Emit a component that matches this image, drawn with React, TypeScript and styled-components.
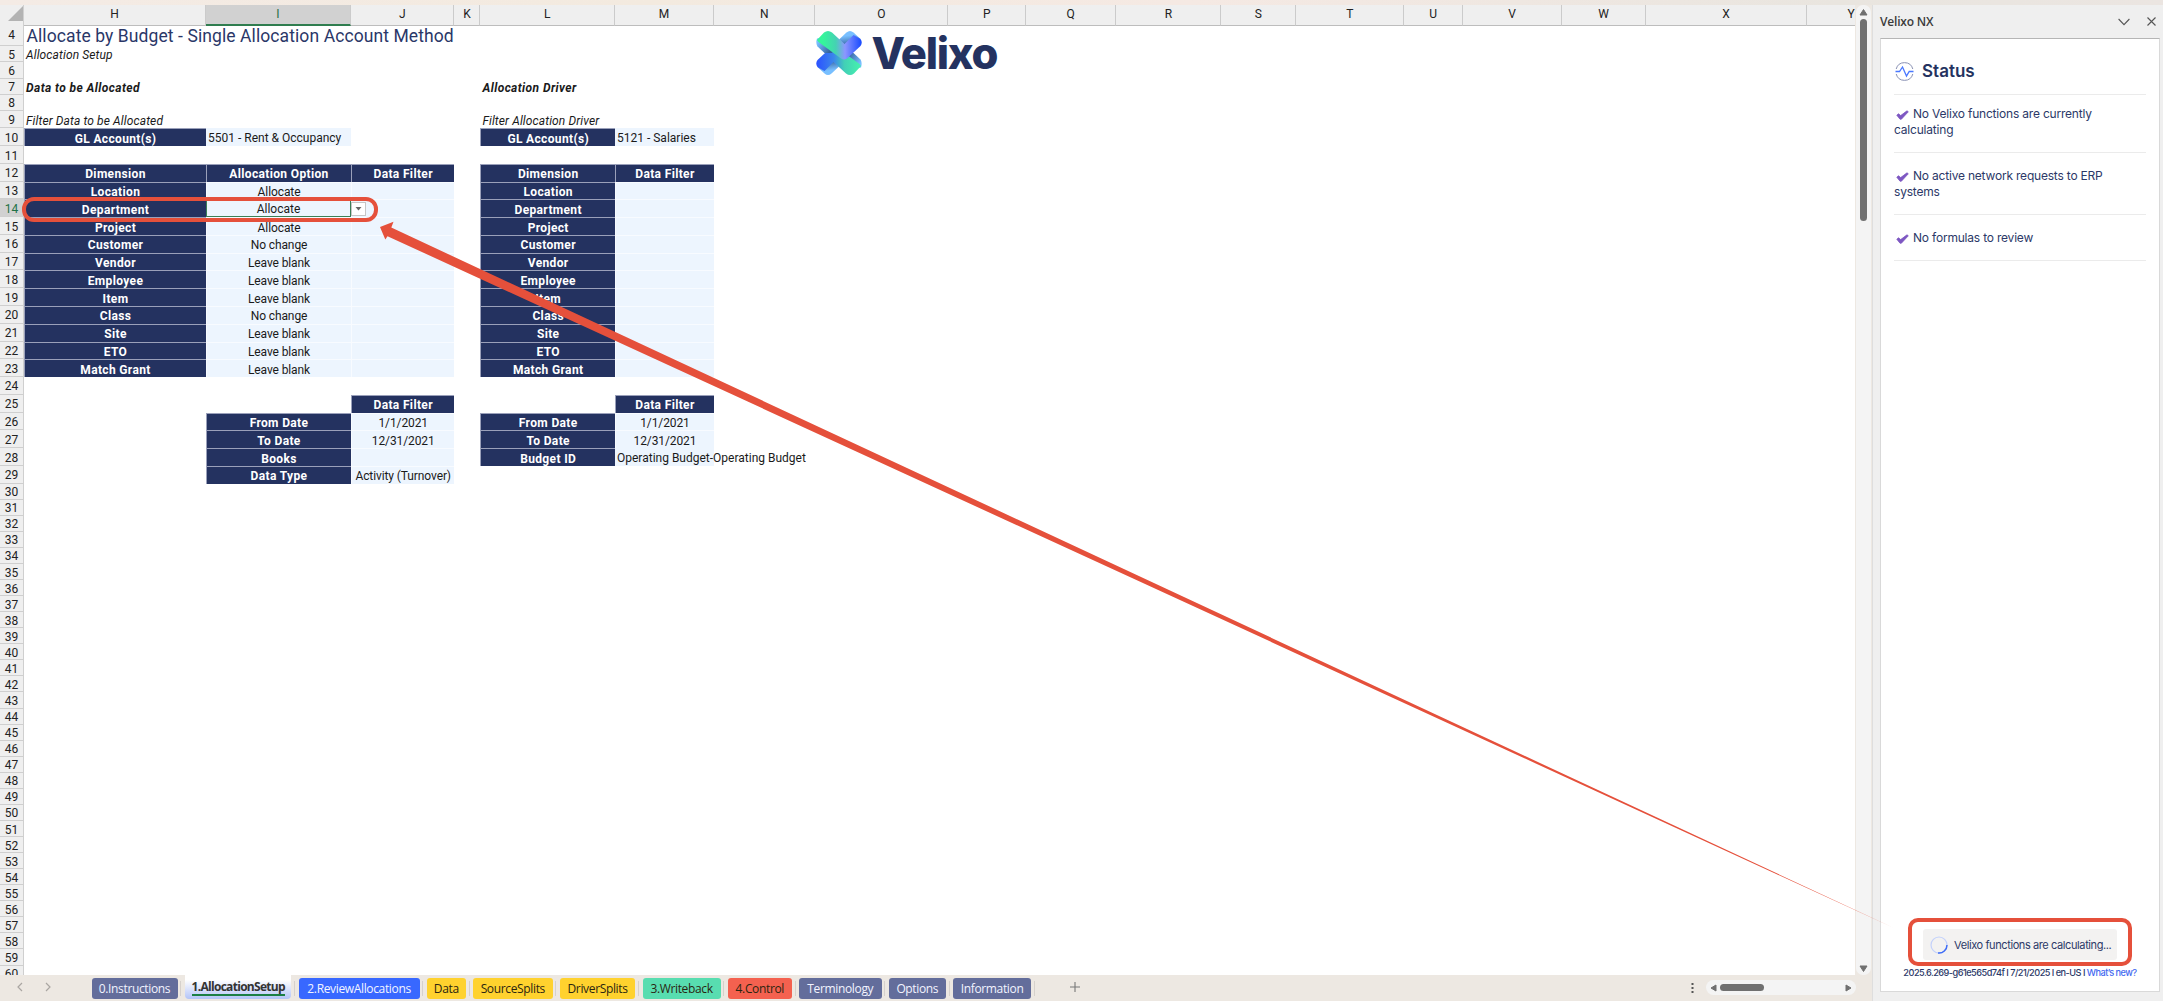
import React from 'react';
import styled, { createGlobalStyle } from 'styled-components';

type CellKind = 'head' | 'input' | 'inputLeft' | 'title' | 'italic' | 'boldItalic' | 'active';
type CellData = [column: string, kind: CellKind, text?: string];

const COLUMNS: [string, number][] = [
  ['H', 182],
  ['I', 145],
  ['J', 103.4],
  ['K', 26],
  ['L', 134.6],
  ['M', 99],
  ['N', 101.5],
  ['O', 133],
  ['P', 77.5],
  ['Q', 90.5],
  ['R', 105],
  ['S', 74.5],
  ['T', 108.5],
  ['U', 58.5],
  ['V', 99],
  ['W', 84],
  ['X', 161],
  ['Y', 89],
];

const DIMENSIONS: [string, string][] = [
  ['Location', 'Allocate'],
  ['Department', 'Allocate'],
  ['Project', 'Allocate'],
  ['Customer', 'No change'],
  ['Vendor', 'Leave blank'],
  ['Employee', 'Leave blank'],
  ['Item', 'Leave blank'],
  ['Class', 'No change'],
  ['Site', 'Leave blank'],
  ['ETO', 'Leave blank'],
  ['Match Grant', 'Leave blank'],
];

const CELLS: Record<number, CellData[]> = {
  4: [['H', 'title', 'Allocate by Budget - Single Allocation Account Method']],
  5: [['H', 'italic', 'Allocation Setup']],
  7: [
    ['H', 'boldItalic', 'Data to be Allocated'],
    ['L', 'boldItalic', 'Allocation Driver'],
  ],
  9: [
    ['H', 'italic', 'Filter Data to be Allocated'],
    ['L', 'italic', 'Filter Allocation Driver'],
  ],
  10: [
    ['H', 'head', 'GL Account(s)'],
    ['I', 'inputLeft', '5501 - Rent & Occupancy'],
    ['L', 'head', 'GL Account(s)'],
    ['M', 'inputLeft', '5121 - Salaries'],
  ],
  12: [
    ['H', 'head', 'Dimension'],
    ['I', 'head', 'Allocation Option'],
    ['J', 'head', 'Data Filter'],
    ['L', 'head', 'Dimension'],
    ['M', 'head', 'Data Filter'],
  ],
  25: [
    ['J', 'head', 'Data Filter'],
    ['M', 'head', 'Data Filter'],
  ],
  26: [
    ['I', 'head', 'From Date'],
    ['J', 'input', '1/1/2021'],
    ['L', 'head', 'From Date'],
    ['M', 'input', '1/1/2021'],
  ],
  27: [
    ['I', 'head', 'To Date'],
    ['J', 'input', '12/31/2021'],
    ['L', 'head', 'To Date'],
    ['M', 'input', '12/31/2021'],
  ],
  28: [
    ['I', 'head', 'Books'],
    ['J', 'input'],
    ['L', 'head', 'Budget ID'],
    ['M', 'inputLeft', 'Operating Budget-Operating Budget'],
  ],
  29: [
    ['I', 'head', 'Data Type'],
    ['J', 'input', 'Activity (Turnover)'],
  ],
};

DIMENSIONS.forEach(([name, option], index) => {
  CELLS[13 + index] = [
    ['H', 'head', name],
    ['I', index === 1 ? 'active' : 'input', option],
    ['J', 'input'],
    ['L', 'head', name],
    ['M', 'input'],
  ];
});

const ROWS = Array.from({ length: 57 }, (_, index) => index + 4);

const rowHeight = (row: number) => {
  if (row === 4) return 23.4;
  if (row < 9) return 16.1;
  if (row === 9) return 17.6;
  if (row < 30) return 17.78;
  return 16.07;
};

const TABS: { label: string; width: number; color: string; light?: boolean; active?: boolean }[] = [
  { label: '0.Instructions', width: 86, color: '#636d9b', light: true },
  { label: '1.AllocationSetup', width: 106, color: '#ffffff', active: true },
  { label: '2.ReviewAllocations', width: 121, color: '#3868ff', light: true },
  { label: 'Data', width: 39, color: '#ffd22e' },
  { label: 'SourceSplits', width: 79.5, color: '#ffd22e' },
  { label: 'DriverSplits', width: 75.5, color: '#ffd22e' },
  { label: '3.Writeback', width: 78, color: '#58ddb0' },
  { label: '4.Control', width: 64, color: '#f4614f' },
  { label: 'Terminology', width: 82.5, color: '#636d9b', light: true },
  { label: 'Options', width: 57, color: '#636d9b', light: true },
  { label: 'Information', width: 78, color: '#636d9b', light: true },
];

const STATUSES = [
  'No Velixo functions are currently calculating',
  'No active network requests to ERP systems',
  'No formulas to review',
];

const App: React.FC = () => {
  return (
    <Window>
      <GlobalStyle />
      <TopStrip />
      <Main>
        <Workbook>
          <SheetArea>
            <Sheet>
              <HeaderRow>
                <Corner>
                  <svg width="15" height="15" viewBox="0 0 15 15">
                    <path d="M15 0v15H0z" fill="#b3b3b3" />
                  </svg>
                </Corner>
                {COLUMNS.map(([name]) => (
                  <ColumnHeader key={name} $active={name === 'I'}>
                    {name}
                  </ColumnHeader>
                ))}
              </HeaderRow>
              {ROWS.map((row) => (
                <Row key={row} $height={rowHeight(row)}>
                  <RowHeader $active={row === 14}>{row}</RowHeader>
                  {(CELLS[row] ?? []).map(([column, kind, text]) => (
                    <Cell
                      key={column}
                      $kind={kind}
                      $column={COLUMNS.findIndex(([name]) => name === column) + 2}
                    >
                      {text}
                      {kind === 'active' && (
                        <Dropdown>
                          <svg width="7" height="4" viewBox="0 0 7 4">
                            <path d="M.5 0h6l-3 3.6z" fill="#666" />
                          </svg>
                        </Dropdown>
                      )}
                    </Cell>
                  ))}
                </Row>
              ))}
              <Logo />
            </Sheet>
            <VerticalScroll>
              <svg width="9" height="7" viewBox="0 0 9 7">
                <path d="M4.5.5 8 6H1z" fill="#707070" stroke="#707070" strokeLinejoin="round" />
              </svg>
              <VerticalThumb />
              <svg width="9" height="7" viewBox="0 0 9 7">
                <path d="M4.5 6.5 8 1H1z" fill="#707070" stroke="#707070" strokeLinejoin="round" />
              </svg>
            </VerticalScroll>
          </SheetArea>
          <TabBar>
            <TabNav>
              <svg width="6" height="10" viewBox="0 0 6 10">
                <path d="M5 1 1 5l4 4" fill="none" stroke="#aaa6a2" strokeWidth="1.2" />
              </svg>
              <svg width="6" height="10" viewBox="0 0 6 10">
                <path d="m1 1 4 4-4 4" fill="none" stroke="#aaa6a2" strokeWidth="1.2" />
              </svg>
            </TabNav>
            {TABS.map(({ label, width, color, light, active }) => (
              <TabSlot key={label} $active={active}>
                {active ? (
                  <ActiveTab>
                    <span>{label}</span>
                  </ActiveTab>
                ) : (
                  <Tab $width={width} $color={color} $light={light}>
                    {label}
                  </Tab>
                )}
              </TabSlot>
            ))}
            <AddSheet>
              <svg width="10" height="10" viewBox="0 0 10 10">
                <path d="M5 0v10M0 5h10" stroke="#777" strokeWidth="1.1" />
              </svg>
            </AddSheet>
            <ScrollGroup>
              <svg width="3" height="10" viewBox="0 0 3 10">
                <path d="M.5 0h2v2h-2zM.5 4h2v2h-2zM.5 8h2v2h-2z" fill="#555" />
              </svg>
              <HorizontalScroll>
                <svg width="7" height="8" viewBox="0 0 7 8">
                  <path d="M1 4 6 1v6z" fill="#707070" stroke="#707070" strokeLinejoin="round" />
                </svg>
                <HorizontalThumb />
                <svg width="7" height="8" viewBox="0 0 7 8">
                  <path d="M6 4 1 1v6z" fill="#707070" stroke="#707070" strokeLinejoin="round" />
                </svg>
              </HorizontalScroll>
            </ScrollGroup>
          </TabBar>
        </Workbook>
        <TaskPane>
          <PaneHeader>
            <PaneTitle>Velixo NX</PaneTitle>
            <svg width="12" height="8" viewBox="0 0 12 8">
              <path d="m.6 1 5.4 5.6L11.4 1" fill="none" stroke="#555" strokeWidth="1.1" />
            </svg>
            <svg width="9" height="9" viewBox="0 0 9 9">
              <path d="m.5.5 8 8m0-8-8 8" stroke="#555" strokeWidth="1.1" />
            </svg>
          </PaneHeader>
          <PaneBody>
            <StatusHeading>
              <PulseIcon />
              Status
            </StatusHeading>
            {STATUSES.map((status) => (
              <StatusItem key={status}>
                <CheckIcon />
                {status}
              </StatusItem>
            ))}
            <Footer>
              <Calculating>
                <Spinner />
                Velixo functions are calculating...
                <Highlight />
              </Calculating>
              <Version>
                2025.6.269-g61e565d74f I 7/21/2025 I en-US I <a>What’s new?</a>
              </Version>
            </Footer>
          </PaneBody>
        </TaskPane>
      </Main>
      <Annotations>
        <RowHighlight />
        <svg width="2163" height="1001" viewBox="0 0 2163 1001">
          <path
            d="M380 227 393.5 221.8 391.3 227.6 1894 928 387.5 236.2 385.3 239.6z"
            fill="#e5503b"
          />
        </svg>
      </Annotations>
    </Window>
  );
};

export default App;

const RIBBON =
  'M2 10 9 2.500Q13-.5 17 2.500L29.500 14 38.500 5 45.500 9Q48 12.500 45.500 16L32 28.500Q29 30.500 26 28.500L3.500 12z';
const LEFT_FOLD = 'M2 8.500Q.5 13 2.500 16.500L9.500 23 17.500 23 16 19 5 8z';
const TOP_FOLD = 'M24 9.500 31.500 2.500Q35-.5 38.500 2.500L45.500 9 39 15 29.500 15z';

const Logo: React.FC = () => (
  <LogoBox>
    <svg width="48" height="46" viewBox="0 0 48 46">
      <defs>
        <linearGradient id="upper" gradientUnits="userSpaceOnUse" x1="4" y1="0" x2="46" y2="0">
          <stop offset="0.1" stopColor="#35f59b" />
          <stop offset="0.4" stopColor="#45d2b2" />
          <stop offset="0.62" stopColor="#8c96ff" />
          <stop offset="1" stopColor="#1c4dff" />
        </linearGradient>
        <linearGradient id="lower" gradientUnits="userSpaceOnUse" x1="46" y1="0" x2="4" y2="0">
          <stop offset="0" stopColor="#2c53ff" />
          <stop offset="0.4" stopColor="#3b86ea" />
          <stop offset="0.65" stopColor="#42d0b6" />
          <stop offset="1" stopColor="#45efae" />
        </linearGradient>
        <linearGradient id="leftFold" x1="0" y1="0" x2="1" y2="0.6">
          <stop offset="0.2" stopColor="#78bfff" />
          <stop offset="1" stopColor="#35629f" />
        </linearGradient>
        <linearGradient id="topFold" x1="0.5" y1="0" x2="0.7" y2="1">
          <stop offset="0.3" stopColor="#78bfff" />
          <stop offset="1" stopColor="#35629f" />
        </linearGradient>
      </defs>
      <g transform="rotate(180 24 23)">
        <path d={LEFT_FOLD} fill="url(#leftFold)" />
        <path d={TOP_FOLD} fill="url(#topFold)" />
        <path d={RIBBON} fill="url(#lower)" />
      </g>
      <path d={LEFT_FOLD} fill="url(#leftFold)" />
      <path d={TOP_FOLD} fill="url(#topFold)" />
      <path d={RIBBON} fill="url(#upper)" />
    </svg>
    <LogoText>Velixo</LogoText>
  </LogoBox>
);

const PulseIcon: React.FC = () => (
  <svg width="19" height="19" viewBox="0 0 19 19" fill="none">
    <path d="M1.200 7a8.600 8.600 0 0 1 16.600 0M1.200 12a8.600 8.600 0 0 0 16.600 0" stroke="#8890b3" />
    <path d="M.5 9.500h4L7.500 5l4 9 2.700-4.500h4.300" stroke="#4a78ff" strokeWidth="1.300" />
  </svg>
);

const CheckIcon: React.FC = () => (
  <CheckSvg width="13" height="10" viewBox="0 0 13 10">
    <path
      d="M.8 5.200 2.500 3.800l2.200 1.800L11 .8l1.300 1L5.400 9.200H4z"
      fill="#7d57c2"
      stroke="#7d57c2"
      strokeWidth="0.8"
      strokeLinejoin="round"
    />
  </CheckSvg>
);

const Spinner: React.FC = () => (
  <svg width="18" height="18" viewBox="0 0 18 18" fill="none">
    <circle cx="9" cy="9" r="8" stroke="#c3d1fb" strokeWidth="1.200" />
    <path d="M17 9a8 8 0 0 1-9 8" stroke="#3f6df5" strokeWidth="1.500" />
  </svg>
);

const GlobalStyle = createGlobalStyle`
  * {
    box-sizing: border-box;
  }

  body {
    margin: 0;
    overflow: hidden;
  }

  svg {
    display: block;
    flex: none;
  }
`;

const Window = styled.div`
  position: relative;
  width: 2163px;
  height: 1001px;
  overflow: hidden;
  background-color: #ede8e2;
  font-family: Roboto, sans-serif;

  display: flex;
  flex-direction: column;
`;

const TopStrip = styled.div`
  height: 5px;
  flex: none;
  background: linear-gradient(90deg, #f4ebe5, #f3eadf 30%, #f5e9e3 55%, #e9e5df 85%, #ebe5e1);
`;

const Main = styled.div`
  flex: 1;
  min-height: 0;
  display: flex;
`;

const Workbook = styled.div`
  width: 1872px;
  flex: none;
  display: flex;
  flex-direction: column;
`;

const SheetArea = styled.div`
  height: 969.5px;
  display: flex;
`;

const Sheet = styled.div`
  position: relative;
  width: 1855px;
  height: 969.5px;
  overflow: hidden;
  background-color: #ffffff;
`;

const GRID = `24px ${COLUMNS.map(([, width]) => `${width}px`).join(' ')}`;

const HeaderRow = styled.div`
  display: grid;
  grid-template-columns: ${GRID};
  height: 18px;
`;

const Corner = styled.div`
  background-color: #efefef;
  border-right: 1px solid #d0d0d0;
  border-bottom: 1px solid #bdbdbd;
  padding: 1px 0 0 8px;
`;

const ColumnHeader = styled.div<{ $active?: boolean }>`
  background-color: ${({ $active }) => ($active ? '#d1d1d1' : '#efefef')};
  border-right: 1px solid #cbcbcb;
  border-bottom: ${({ $active }) => ($active ? '2px solid #2f7d4f' : '1px solid #bdbdbd')};

  font-size: 12px;
  line-height: 19px;
  text-align: center;
  color: ${({ $active }) => ($active ? '#1f7145' : '#222222')};
`;

const Row = styled.div<{ $height: number }>`
  display: grid;
  grid-template-columns: ${GRID};
  height: ${({ $height }) => $height}px;
`;

const RowHeader = styled.div<{ $active?: boolean }>`
  grid-column: 1;
  min-height: 0;
  padding-top: 2px;
  background-color: ${({ $active }) => ($active ? '#d1d1d1' : '#efefef')};
  border-right: 1px solid #cfcfcf;
  border-bottom: 1px solid #cfcfcf;

  font-size: 12px;
  line-height: 12px;
  text-align: center;
  color: ${({ $active }) => ($active ? '#1f7145' : '#222222')};

  display: flex;
  justify-content: center;
  align-items: center;
`;

const KIND_STYLES: Record<CellKind, string> = {
  head: `
    justify-content: center;
    background-color: #243260;
    border-top: 1px solid #9aa0ba;
    border-left: 1px solid #9aa0ba;
    color: #ffffff;
    font-weight: 700;
    letter-spacing: 0.35px;
  `,
  input: `
    justify-content: center;
    background-color: #edf5fe;
    border-top: 1px solid #f8fbff;
    border-left: 1px solid #f8fbff;
    letter-spacing: -0.1px;
  `,
  inputLeft: `
    padding-left: 2px;
    background-color: #edf5fe;
  `,
  active: `
    position: relative;
    justify-content: center;
    background-color: #edf5fe;
    outline: 1px solid #3b7f58;
    outline-offset: -1px;
  `,
  title: `
    padding-left: 2.5px;
    font-size: 17.5px;
    letter-spacing: 0.09px;
    color: #2a3768;
  `,
  italic: `
    padding-left: 2px;
    font-style: italic;
    letter-spacing: 0.12px;
  `,
  boldItalic: `
    padding-left: 2px;
    font-style: italic;
    font-weight: 700;
    letter-spacing: 0.42px;
  `,
};

const Cell = styled.div<{ $kind: CellKind; $column: number }>`
  grid-column: ${({ $column }) => $column};
  grid-row: 1;
  min-width: 0;
  min-height: 0;
  padding-top: 2px;
  font-size: 12px;
  line-height: 14px;
  white-space: nowrap;
  color: #1a1a1a;

  display: flex;
  align-items: center;
  ${({ $kind }) => KIND_STYLES[$kind]}
`;

const Dropdown = styled.span`
  position: absolute;
  left: 145px;
  top: 3px;
  width: 15px;
  height: 14px;
  z-index: 1;
  border: 1px solid #c6c6c6;
  background-color: #ffffff;

  display: flex;
  justify-content: center;
  align-items: center;
`;

/* The logo is a picture that floats over the cells */
const LogoBox = styled.div`
  position: absolute;
  left: 814.5px;
  top: 25px;

  display: flex;
  align-items: center;
  gap: 9px;
`;

const LogoText = styled.span`
  font-family: Inter, sans-serif;
  font-weight: 800;
  font-size: 43.5px;
  line-height: 46px;
  letter-spacing: -1.3px;
  color: #243260;
`;

const VerticalScroll = styled.div`
  margin-left: 1px;
  width: 15px;
  padding: 4px 0 3px;
  border-radius: 7px;
  background-color: #f4f4f4;

  display: flex;
  flex-direction: column;
  align-items: center;

  & > svg:last-child {
    margin-top: auto;
  }
`;

const VerticalThumb = styled.div`
  margin-top: 3px;
  width: 7px;
  height: 202px;
  border-radius: 4px;
  background-color: #707070;
`;

const TabBar = styled.div`
  flex: 1;
  display: flex;
  align-items: flex-start;
`;

const TabNav = styled.div`
  width: 88px;
  height: 25px;
  padding-left: 17px;

  display: flex;
  align-items: center;
  gap: 22px;
`;

const TabSlot = styled.div<{ $active?: boolean }>`
  height: 24px;
  padding: ${({ $active }) => ($active ? '0 3.8px 0 4px' : '3px 3.75px 0 3.5px')};
  position: relative;

  &::after {
    content: '';
    position: absolute;
    right: 0;
    top: 6px;
    width: 1px;
    height: 15px;
    background-color: #d6d1cc;
  }
`;

const Tab = styled.div<{ $width: number; $color: string; $light?: boolean }>`
  width: ${({ $width }) => $width}px;
  height: 21px;
  border-radius: 3px;
  background-color: ${({ $color }) => $color};

  font-family: 'Open Sans', sans-serif;
  font-size: 12px;
  line-height: 22px;
  letter-spacing: -0.35px;
  text-align: center;
  white-space: nowrap;
  color: ${({ $light }) => ($light ? '#f2f4ff' : '#2b2510')};
`;

const ActiveTab = styled.div`
  width: 106px;
  height: 24px;
  border-radius: 0 0 4px 4px;
  background: linear-gradient(#ffffff 20%, #b3c4f8);

  display: flex;
  justify-content: center;
  align-items: flex-start;

  & > span {
    height: 21px;
    border-bottom: 2px solid #1c7f45;

    font-family: 'Open Sans', sans-serif;
    font-weight: 700;
    font-size: 12px;
    line-height: 23px;
    letter-spacing: -0.7px;
    white-space: nowrap;
    color: #333333;
  }
`;

const AddSheet = styled.div`
  margin-left: 35px;
  height: 25px;
  display: flex;
  align-items: center;
`;

const ScrollGroup = styled.div`
  margin-left: auto;
  padding-right: 16px;
  height: 26px;

  display: flex;
  align-items: center;
  gap: 12px;
`;

const HorizontalScroll = styled.div`
  width: 150px;
  height: 15px;
  padding: 0 4px;
  border-radius: 8px;
  background-color: #f4f4f4;

  display: flex;
  align-items: center;

  & > svg:last-child {
    margin-left: auto;
  }
`;

const HorizontalThumb = styled.div`
  margin-left: 3px;
  width: 44px;
  height: 7px;
  border-radius: 4px;
  background-color: #707070;
`;

const TaskPane = styled.div`
  flex: 1;
  min-width: 0;
  padding: 0 3px 9px 7px;
  background-color: #efefef;
  border-left: 1px solid #dedede;

  display: flex;
  flex-direction: column;
`;

const PaneHeader = styled.div`
  height: 33px;
  padding-right: 4px;

  display: flex;
  align-items: center;
  gap: 17px;
`;

const PaneTitle = styled.span`
  margin-right: auto;
  font-family: 'Open Sans', sans-serif;
  font-weight: 600;
  font-size: 12px;
  letter-spacing: -0.2px;
  color: #3b3b3b;
`;

const PaneBody = styled.div`
  flex: 1;
  padding: 0 13px;
  border: 1px solid #d9d9d9;
  border-top-color: #b5b5b5;
  background-color: #ffffff;

  font-family: Inter, sans-serif;
  font-size: 12px;
  line-height: 16px;
  color: #2c3968;

  display: flex;
  flex-direction: column;
`;

const StatusHeading = styled.div`
  height: 56px;
  padding: 9px 0 0 1px;
  border-bottom: 1px solid #ebebeb;

  font-size: 17px;
  font-weight: 600;
  color: #243260;

  display: flex;
  align-items: center;
  gap: 8px;
`;

const StatusItem = styled.div`
  padding: 15px 0 14px;
  border-bottom: 1px solid #ebebeb;
  letter-spacing: -0.2px;

  /* keeps the second word group on the next line */
  padding-right: 16px;

  ${StatusHeading} + & {
    padding-top: 11px;
    padding-right: 24px;
  }
`;

const CheckSvg = styled.svg`
  display: inline-block;
  margin: 0 4px 0 2px;
  vertical-align: -2px;
`;

const Footer = styled.div`
  margin-top: auto;
  padding-bottom: 10px;

  display: flex;
  flex-direction: column;
  align-items: center;
`;

const Calculating = styled.div`
  position: relative;
  width: 194px;
  height: 31px;
  padding-left: 7px;
  border-radius: 3px;
  background-color: #f3f2f1;
  font-size: 11px;
  letter-spacing: -0.4px;
  white-space: nowrap;

  display: flex;
  align-items: center;
  gap: 6px;
`;

const Highlight = styled.div`
  position: absolute;
  inset: -11px -14.5px -6px -15.5px;
  border: 4px solid #e5503b;
  border-radius: 10px;
`;

const Version = styled.div`
  margin-top: 5px;
  font-size: 9.2px;
  font-weight: 500;
  letter-spacing: -0.53px;
  white-space: nowrap;

  & a {
    color: #3f68f0;
  }
`;

const Annotations = styled.div`
  position: absolute;
  inset: 0;
  pointer-events: none;
`;

const RowHighlight = styled.div`
  position: absolute;
  left: 21.5px;
  top: 197px;
  width: 356.5px;
  height: 25px;
  border: 4px solid #e5503b;
  border-radius: 12px;
`;
